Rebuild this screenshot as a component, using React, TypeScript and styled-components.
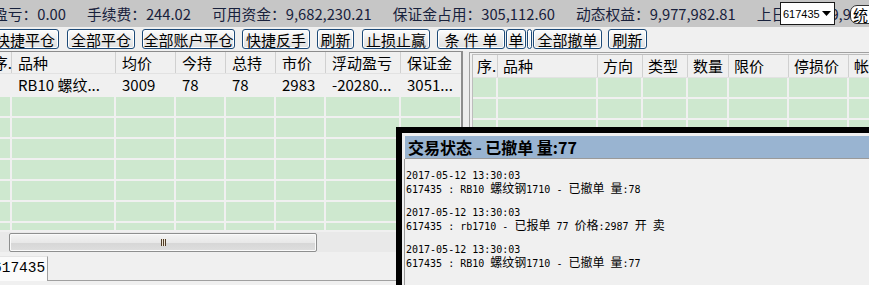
import React from 'react';
import styled, { createGlobalStyle } from 'styled-components';

const GlobalStyle = createGlobalStyle`
  html, body {
    margin: 0;
    padding: 0;
    background: #f0f0f0;
    overflow: hidden;
  }
  body {
    font-family: "Noto Sans CJK SC", "Liberation Sans", sans-serif;
  }
`;

const Screen = styled.div`
  position: relative;
  width: 869px;
  height: 285px;
  overflow: hidden;
  background: #f0f0f0;
  color: #000;
`;

// ---- status bar ----
const StatusBar = styled.div`
  position: relative;
  height: 27px;
  background: #c6c6c6;
  overflow: hidden;
`;

const StatusTrack = styled.div`
  display: flex;
  gap: 21px;
  margin-left: -7px;
  height: 27px;
  align-items: center;
  white-space: nowrap;
  font-size: 14.75px;
  line-height: 18px;
  color: #18213c;
`;

const AccountSelect = styled.div`
  position: absolute;
  top: 2px;
  left: 780px;
  width: 55px;
  height: 23px;
  box-sizing: border-box;
  border: 1px solid #1a1a1a;
  background: #fff;
  display: flex;
  align-items: center;
  justify-content: space-between;
  padding: 0 3px 0 2px;
  font-family: "Liberation Sans", Arial, sans-serif;
  font-size: 11px;
  color: #000;
`;

const SideButton = styled.div`
  position: absolute;
  top: 5px;
  left: 850px;
  width: 30px;
  height: 19px;
  box-sizing: border-box;
  border: 1px solid #333;
  border-radius: 7px 0 0 7px;
  background: #fff;
  padding-left: 2px;
  font-size: 15px;
  line-height: 17px;
`;

// ---- toolbar ----
const Toolbar = styled.div`
  display: flex;
  height: 24px;
  padding-top: 2px;
  box-sizing: border-box;
  overflow: hidden;
`;

const ToolButton = styled.button<{ $w: number; $gap?: number; $spread?: boolean }>`
  flex: none;
  width: ${(p) => p.$w}px;
  height: 20px;
  margin-left: ${(p) => p.$gap ?? 7}px;
  padding: 0;
  border: 1px solid #1d4a78;
  border-radius: 3px;
  background: linear-gradient(#fdfdfd, #ececec 50%, #e0e0e0);
  box-shadow: inset 0 0 0 1px #fff;
  font-family: "Noto Sans CJK SC", sans-serif;
  font-size: 15px;
  line-height: 17px;
  color: #000;
  white-space: nowrap;
  overflow: hidden;
  letter-spacing: ${(p) => (p.$spread ? '4px' : '0')};
  text-indent: ${(p) => (p.$spread ? '4px' : '0')};
`;

// ---- panes ----
const Workspace = styled.div`
  display: flex;
  height: 201px;
`;

const LeftPane = styled.div`
  flex: none;
  width: 463px;
  display: flex;
  flex-direction: column;
  box-sizing: border-box;
  border-top: 1px solid #8c8c8c;
  border-right: 2px solid #8c8c8c;
`;

const TableArea = styled.div`
  flex: 1;
  overflow: hidden;
`;

const Splitter = styled.div`
  flex: none;
  width: 6px;
  background: #ececec;
`;

const RightPane = styled.div`
  flex: 1;
  margin-top: 1px;
  border-left: 1px solid #a0a0a0;
  border-top: 1px solid #a0a0a0;
  padding: 1px 0 0 2px;
  overflow: hidden;
`;

const RightTable = styled.div`
  border-left: 1px solid #bdbdbd;
  border-top: 1px solid #bdbdbd;
  height: 100%;
`;

const Row = styled.div<{ $cols: string; $h: number; $bg: string; $line?: string }>`
  display: grid;
  grid-template-columns: ${(p) => p.$cols};
  height: ${(p) => p.$h}px;
  box-sizing: border-box;
  background: ${(p) => p.$bg};
  border-bottom: 2px solid ${(p) => p.$line ?? p.$bg};
  & > * {
    border-right: 2px solid ${(p) => p.$line ?? p.$bg};
  }
`;

const HeadRow = styled.div<{ $cols: string; $h: number }>`
  display: grid;
  grid-template-columns: ${(p) => p.$cols};
  height: ${(p) => p.$h}px;
  box-sizing: border-box;
  background: #f0f0f0;
  border-bottom: 1px solid #e2e2e2;
`;

const Cell = styled.div<{ $end?: boolean; $pad?: number }>`
  display: flex;
  align-items: center;
  justify-content: ${(p) => (p.$end ? 'flex-end' : 'flex-start')};
  padding-left: ${(p) => (p.$end ? 0 : p.$pad ?? 6)}px;
  box-sizing: border-box;
  overflow: hidden;
  white-space: nowrap;
  font-size: 15px;
  line-height: 18px;
  color: #000;
`;

const HeadCell = styled(Cell)`
  box-shadow: inset -1px 0 #d0d0d0;
`;

// ---- scrollbar + tabs ----
const HScroll = styled.div`
  flex: none;
  height: 22px;
  box-sizing: border-box;
  border-top: 2px solid #f0f0f0;
  background: #e9e9e9;
  padding-left: 9px;
  display: flex;
  align-items: center;
`;

const Thumb = styled.div`
  width: 308px;
  height: 19px;
  box-sizing: border-box;
  border: 1px solid #8e8f8f;
  border-radius: 2px;
  background: linear-gradient(#f4f4f4, #e8e8e8 50%, #d6d6d6 51%, #dedede);
  box-shadow: inset 0 0 0 1px #fafafa;
  display: flex;
  align-items: center;
  justify-content: center;
`;

const Grip = styled.span`
  width: 5px;
  height: 7px;
  background: repeating-linear-gradient(90deg, #4e3c28 0 1px, #f0e6d6 1px 2px);
`;

const TabStrip = styled.div`
  display: flex;
  height: 29px;
  padding-top: 4px;
  box-sizing: border-box;
`;

const Tab = styled.div`
  flex: none;
  width: 58px;
  margin-left: -10px;
  padding-left: 3px;
  box-sizing: border-box;
  background: #fbfbfb;
  border-right: 1px solid #a0a0a0;
  border-top: 1px solid #e4e4e4;
  font-family: "Liberation Mono", monospace;
  font-size: 14.5px;
  line-height: 23px;
  color: #000;
`;

const TabFiller = styled.div`
  flex: 1;
  border-bottom: 1px solid #a0a0a0;
`;

// ---- dialog ----
const Dialog = styled.div`
  position: absolute;
  left: 396px;
  top: 127px;
  width: 490px;
  height: 170px;
  box-sizing: border-box;
  background: #000;
  padding: 6px 0 0 6px;
`;

const DialogFrame = styled.div`
  height: 100%;
  box-sizing: border-box;
  background: #f0f0f0;
  padding: 3px 0 0 2px;
`;

const TitleBar = styled.div`
  height: 23px;
  margin-left: 1px;
  box-sizing: border-box;
  background: #99b4d1;
  border-bottom: 1px solid #9a9a9a;
  padding-left: 3px;
  font-size: 16px;
  font-weight: bold;
  line-height: 22px;
  color: #000;
  white-space: nowrap;
`;

const LogBody = styled.div`
  height: 100%;
  border-left: 1px solid #9b9b9b;
  padding: 11px 0 0 1px;
`;

const LogEntry = styled.div`
  margin-bottom: 13px;
`;

const LogLine = styled.div`
  height: 12px;
  font-family: "DejaVu Sans Mono", "Liberation Mono", "Noto Sans CJK SC", monospace;
  font-size: 10px;
  line-height: 12px;
  white-space: pre;
  color: #000;
`;

const Cjk = styled.span`
  font-family: "Noto Sans CJK SC", sans-serif;
  font-size: 12px;
`;

const leftCols = '12px 104px 60px 50px 50px 50px 75px 61px';
const rightCols = '25px 100px 45px 45px 41px 60px 60px 60px';
const green = '#cee8cf';
const gridLine = '#f0f0f0';

const statusItems = [
  '盈亏：0.00',
  '手续费：244.02',
  '可用资金：9,682,230.21',
  '保证金占用：305,112.60',
  '动态权益：9,977,982.81',
  '上日权益：9,977,982.81',
];

const leftHead = ['品种', '均价', '今持', '总持', '市价', '浮动盈亏', '保证金'];
const leftRow = ['', 'RB10 螺纹...', '3009', '78', '78', '2983', '-20280...', '3051...'];
const rightHead = ['序.', '品种', '方向', '类型', '数量', '限价', '停损价', '帐'];

const logs = [
  ['2017-05-12 13:30:03', '617435 : RB10 螺纹钢1710 - 已撤单 量:78'],
  ['2017-05-12 13:30:03', '617435 : rb1710 - 已报单 77 价格:2987 开 卖'],
  ['2017-05-12 13:30:03', '617435 : RB10 螺纹钢1710 - 已撤单 量:77'],
];

const renderMixed = (text: string) =>
  text.split(/([\u4e00-\u9fff]+)/).map((part, i) =>
    /[\u4e00-\u9fff]/.test(part) ? <Cjk key={i}>{part}</Cjk> : part
  );

const EmptyRows: React.FC<{ cols: string; count: number; n: number }> = ({ cols, count, n }) => (
  <>
    {Array.from({ length: count }).map((_, r) => (
      <Row key={r} $cols={cols} $h={21} $bg={green} $line={gridLine}>
        {Array.from({ length: n }).map((__, c) => (
          <div key={c} />
        ))}
      </Row>
    ))}
  </>
);

const App: React.FC = () => {
  return (
    <Screen>
      <GlobalStyle />
      <StatusBar>
        <StatusTrack>
          {statusItems.map((s) => (
            <span key={s}>{s}</span>
          ))}
        </StatusTrack>
        <AccountSelect>
          <span>617435</span>
          <svg width="9" height="5" viewBox="0 0 9 5">
            <polygon points="0,0 9,0 4.5,5" fill="#000" />
          </svg>
        </AccountSelect>
        <SideButton>统</SideButton>
      </StatusBar>

      <Toolbar>
        <ToolButton $w={68} $gap={-9}>快捷平仓</ToolButton>
        <ToolButton $w={68} $gap={8}>全部平仓</ToolButton>
        <ToolButton $w={93}>全部账户平仓</ToolButton>
        <ToolButton $w={68}>快捷反手</ToolButton>
        <ToolButton $w={37}>刷新</ToolButton>
        <ToolButton $w={68} $gap={8}>止损止赢</ToolButton>
        <ToolButton $w={68} $spread>条件单</ToolButton>
        <ToolButton $w={20} $gap={1}>单</ToolButton>
        <ToolButton $w={5} $gap={1} />
        <ToolButton $w={69} $gap={1}>全部撤单</ToolButton>
        <ToolButton $w={39} $gap={6}>刷新</ToolButton>
      </Toolbar>

      <Workspace>
        <LeftPane>
          <TableArea>
            <HeadRow $cols={leftCols} $h={22}>
              <HeadCell $end>
                <span>序.</span>
              </HeadCell>
              {leftHead.map((h) => (
                <HeadCell key={h}>{h}</HeadCell>
              ))}
            </HeadRow>
            <Row $cols={leftCols} $h={23} $bg="#f0f0f0">
              {leftRow.map((v, i) => (
                <Cell key={i}>{v}</Cell>
              ))}
            </Row>
            <EmptyRows cols={leftCols} count={7} n={8} />
          </TableArea>
          <HScroll>
            <Thumb>
              <Grip />
            </Thumb>
          </HScroll>
        </LeftPane>
        <Splitter />
        <RightPane>
          <RightTable>
            <HeadRow $cols={rightCols} $h={23}>
              {rightHead.map((h, i) => (
                <HeadCell key={h} $pad={i === 0 ? 4 : 5}>
                  {h}
                </HeadCell>
              ))}
            </HeadRow>
            <EmptyRows cols={rightCols} count={8} n={8} />
          </RightTable>
        </RightPane>
      </Workspace>

      <TabStrip>
        <Tab>617435</Tab>
        <TabFiller />
      </TabStrip>

      <Dialog>
        <DialogFrame>
          <TitleBar>交易状态 - 已撤单 量:77</TitleBar>
          <LogBody>
            {logs.map(([time, msg], i) => (
              <LogEntry key={i}>
                <LogLine>{time}</LogLine>
                <LogLine>{renderMixed(msg)}</LogLine>
              </LogEntry>
            ))}
          </LogBody>
        </DialogFrame>
      </Dialog>
    </Screen>
  );
};

export default App;
